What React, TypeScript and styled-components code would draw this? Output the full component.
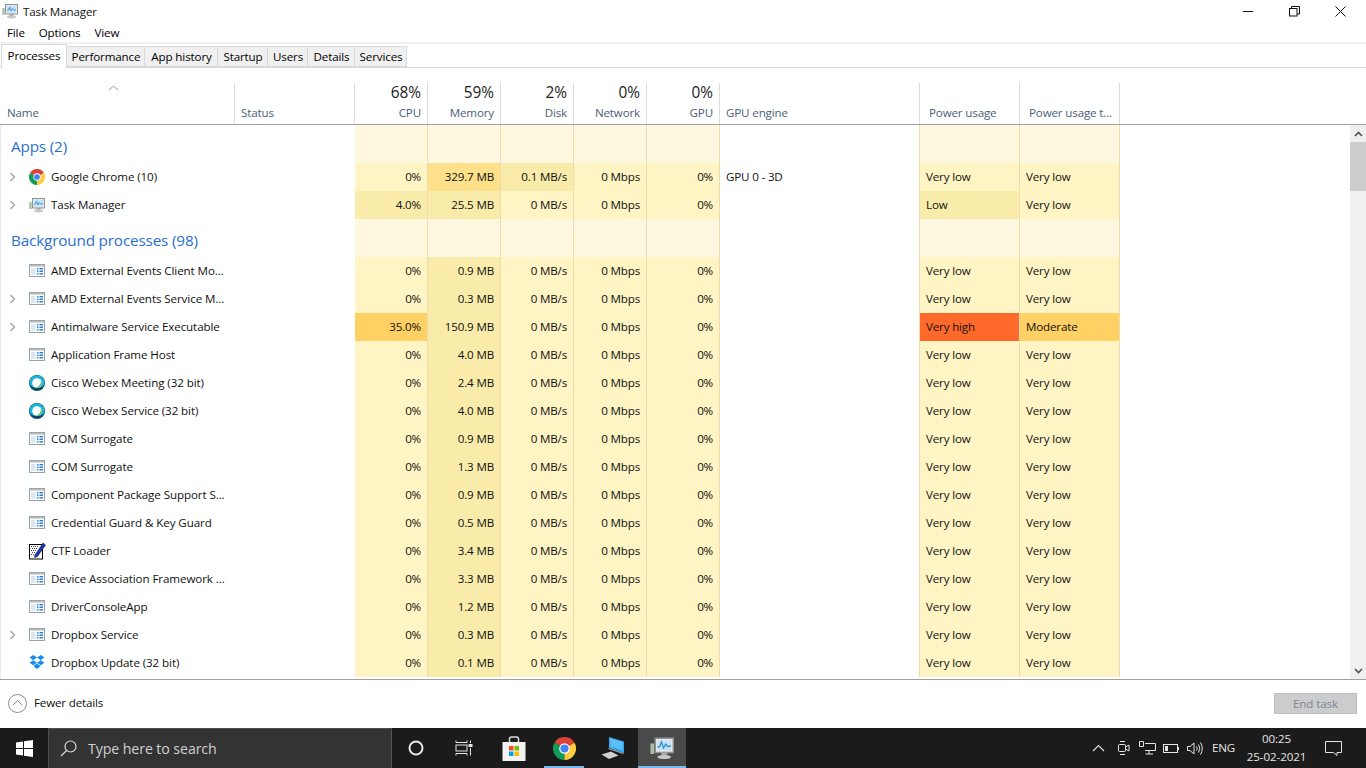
import React from 'react';
import styled, { createGlobalStyle } from 'styled-components';

const Global = createGlobalStyle`
  html, body { margin: 0; padding: 0; background: #fff; overflow: hidden; }
  body { font-family: "Open Sans", "Noto Sans", "Liberation Sans", sans-serif; font-size: 12px; color: #000; }
  * { box-sizing: border-box; }
`;

const COLS = '235px 120px 73px 73px 73px 73px 73px 200px 100px 100px';

const Page = styled.div`
  width: 1366px; height: 768px; display: flex; flex-direction: column; overflow: hidden;
`;
const TitleBar = styled.div`
  height: 22px; display: flex; align-items: center; padding-left: 2px; gap: 5px;
`;
const TitleText = styled.span`font-size: 11.6px; letter-spacing: -0.12px; color: #111;`;
const WinButtons = styled.div`
  margin-left: auto; display: flex; padding-right: 3px;
`;
const WinBtn = styled.div`
  width: 46px; height: 22px; display: flex; align-items: center; justify-content: center;
`;
const MenuBar = styled.div`
  height: 20px; display: flex; gap: 14px; padding-left: 7px; align-items: center; font-size: 11.6px; letter-spacing: -0.15px;
`;
const TabStrip = styled.div`
  height: 26px; background: linear-gradient(#f0f0f0 0 2px, #fff 2px); display: flex; align-items: flex-end; border-bottom: 1px solid #d9d9d9; padding-left: 1px;
`;
const Tab = styled.div<{ $active?: boolean; $w: number }>`
  width: ${p => p.$w}px;
  height: ${p => (p.$active ? 24 : 21)}px;
  margin-bottom: ${p => (p.$active ? -1 : 0)}px;
  background: ${p => (p.$active ? '#fff' : '#f0f0f0')};
  border: 1px solid #d9d9d9;
  border-bottom: ${p => (p.$active ? 'none' : '1px solid #d9d9d9')};
  border-left: ${p => (p.$active ? '1px solid #d9d9d9' : 'none')};
  display: flex; align-items: center; justify-content: center;
  font-size: 11.6px; letter-spacing: -0.12px; padding-bottom: ${p => (p.$active ? 3 : 0)}px;
  padding-left: ${p => (p.$active ? 0 : 1)}px;
  white-space: nowrap;
`;
const HeaderWrap = styled.div`
  margin-top: 15px; height: 42px; border-bottom: 1px solid #a0a0a0; flex: none;
`;
const HeaderRow = styled.div`
  display: grid; grid-template-columns: ${COLS}; width: 1120px; height: 41px;
`;
const HeadCell = styled.div<{ $left?: boolean }>`
  position: relative;
  border-right: 1px solid #dcdcdc;
  display: flex; flex-direction: column; justify-content: flex-end;
  align-items: ${p => (p.$left ? 'flex-start' : 'flex-end')};
  padding: 0 6px 3px 6px;
`;
const HeadPct = styled.div`font-size: 15.4px; line-height: 20px; color: #222; margin-bottom: 1px;`;
const HeadLabel = styled.div<{ $inset?: number }>`
  font-size: 11.6px; line-height: 17px; color: #4c607a; letter-spacing: -0.15px;
  white-space: nowrap; padding-left: ${p => p.$inset ?? 0}px;
`;
const SortCaret = styled.svg`position: absolute; left: 108px; top: 2px;`;

const Body = styled.div`
  flex: none; height: 555px; display: flex; border-bottom: 1px solid #a0a0a0; overflow: hidden;
`;
const Table = styled.div`width: 1350px; overflow: hidden; box-shadow: inset 1px 0 0 #e8e8e8;`;
const Row = styled.div<{ $h: number }>`
  display: grid; grid-template-columns: ${COLS}; width: 1120px; height: ${p => p.$h}px;
`;
const NameCell = styled.div`
  display: flex; align-items: center; white-space: nowrap; overflow: hidden; padding-left: 9px; padding-bottom: 1px;
  font-size: 11.6px; letter-spacing: -0.09px; color: #111;
`;
const Chevron = styled.svg`width: 8px; height: 10px; flex: none;`;
const ChevronSlot = styled.span`width: 20px; flex: none; display: flex;`;
const IconSlot = styled.span`width: 22px; flex: none; display: flex; align-items: center;`;
const GroupLabel = styled.div<{ $pt: number }>`
  display: flex; align-items: center; padding-left: 11px; padding-top: ${p => p.$pt}px;
  font-size: 15.3px; letter-spacing: -0.18px; color: #2a6fcf; white-space: nowrap;
`;
const Blank = styled.div``;
const Cell = styled.div<{ $bg: string; $left?: boolean }>`
  background: ${p => p.$bg};
  border-right: 1px solid #f0dca8;
  display: flex; align-items: center;
  justify-content: ${p => (p.$left ? 'flex-start' : 'flex-end')};
  padding: 0 6px 1px 6px;
  font-size: 11.6px; letter-spacing: -0.17px; color: #111; white-space: nowrap;
`;
const EngineCell = styled.div`
  border-right: 1px solid #f0dca8; display: flex; align-items: center; padding: 0 6px 1px 6px;
  font-size: 11.6px; letter-spacing: -0.17px; color: #111;
`;
const ScrollBar = styled.div`
  width: 16px; margin-left: auto; background: #f0f0f0; display: flex; flex-direction: column;
`;
const ScrollBtn = styled.div`
  height: 17px; flex: none; display: flex; align-items: center; justify-content: center;
`;
const ScrollThumb = styled.div`height: 49px; flex: none; background: #cdcdcd;`;
const ScrollFill = styled.div`flex: 1;`;

const Footer = styled.div`
  height: 48px; flex: none; display: flex; align-items: center; padding: 0 9px 2px 8px; gap: 7px;
  font-size: 11.6px; letter-spacing: -0.17px; color: #111;
`;
const FooterLabel = styled.span`padding-bottom: 1px;`;
const EndTask = styled.div`
  margin-left: auto; width: 83px; height: 21px; background: #cccccc; border: 1px solid #bfbfbf;
  display: flex; align-items: center; justify-content: center; color: #7c8594; font-size: 11.6px; letter-spacing: -0.1px;
`;

const TaskBar = styled.div`
  height: 40px; flex: none; background: #1b1b1b; display: flex; align-items: stretch; color: #fff;
`;
const StartBtn = styled.div`width: 48px; display: flex; align-items: center; justify-content: center;`;
const SearchBox = styled.div`
  width: 344px; background: #333333; border: 1px solid #4f4f4f; border-bottom: none; border-right-color: #555;
  display: flex; align-items: center; padding-left: 11px; gap: 11px; color: #cfcfcf; font-size: 14.2px; letter-spacing: -0.1px;
`;
const TbSlot = styled.div<{ $w: number; $active?: boolean; $running?: boolean }>`
  width: ${p => p.$w}px; display: flex; align-items: center; justify-content: center; position: relative;
  background: ${p => (p.$active ? '#4a4a4a' : 'transparent')};
  ${p => (p.$running ? `&::after { content: ''; position: absolute; left: ${p.$active ? 0 : 4}px; right: ${p.$active ? 0 : 4}px; bottom: 0; height: 2px; background: #76b9ed; }` : '')}
`;
const Tray = styled.div`
  margin-left: auto; display: flex; align-items: center; color: #e6e6e6; font-size: 11.6px;
`;
const TrayIcon = styled.div<{ $w: number }>`
  width: ${p => p.$w}px; display: flex; align-items: center; justify-content: center;
`;
const Lang = styled.div`width: 33px; text-align: center; letter-spacing: -0.2px; padding-bottom: 1px;`;
const Clock = styled.div`
  width: 73px; text-align: center; line-height: 18.5px; font-size: 11.6px; letter-spacing: -0.1px;
`;
const Notify = styled.div`width: 40px; margin-right: 13px; display: flex; align-items: center; justify-content: center;`;

/* ---------- icons ---------- */
const TmIcon = ({ s = 16 }: { s?: number }) => (
  <svg width={s} height={s} viewBox="0 0 16 16">
    <rect x="0.3" y="5" width="2.4" height="7" fill="#a9c09f" />
    <rect x="3.5" y="1.5" width="12" height="9.5" fill="#e4e8ea" stroke="#8f9396" />
    <rect x="5" y="3" width="9" height="6.5" fill="#c4e2f8" />
    <path d="M5 7.5 L6.5 7 L7.7 4 L9 8 L10.5 5.5 L12 7.2 L14 6.5" fill="none" stroke="#3a8fcf" strokeWidth="0.9" />
    <rect x="7.5" y="11" width="4" height="2" fill="#aaa" />
    <ellipse cx="9.5" cy="14" rx="4.6" ry="1.4" fill="#c8c8c8" />
  </svg>
);
const AppIcon = () => (
  <svg width="16" height="13" viewBox="0 0 16 13">
    <rect x="0.5" y="0.5" width="15" height="12" fill="#fff" stroke="#9aa1a7" />
    <rect x="1" y="1" width="14" height="1.6" fill="#b8bfc5" />
    <rect x="2" y="4" width="4.5" height="7" fill="#d9e8f5" />
    <rect x="8" y="4" width="1.5" height="1.5" fill="#2f86d0" />
    <rect x="10.5" y="4" width="3.5" height="1.5" fill="#2f86d0" />
    <rect x="8" y="6.5" width="1.5" height="1.5" fill="#2f86d0" />
    <rect x="10.5" y="6.5" width="3.5" height="1.5" fill="#2f86d0" />
    <rect x="8" y="9" width="1.5" height="1.5" fill="#2f86d0" />
    <rect x="10.5" y="9" width="3.5" height="1.5" fill="#2f86d0" />
  </svg>
);
const ChromeIcon = ({ s = 16 }: { s?: number }) => (
  <svg width={s} height={s} viewBox="0 0 48 48">
    <path d="M24 24 L44.8 12 A24 24 0 0 0 3.2 12 Z" fill="#db4437" />
    <path d="M3.2 12 A24 24 0 0 0 24 48 L24 24 Z" fill="#0f9d58" />
    <path d="M44.8 12 A24 24 0 0 1 24 48 L24 24 Z" fill="#ffcd40" />
    <circle cx="24" cy="24" r="11" fill="#fff" />
    <circle cx="24" cy="24" r="8.6" fill="#4285f4" />
  </svg>
);
const WebexIcon = () => (
  <svg width="16" height="16" viewBox="0 0 16 16">
    <circle cx="8" cy="8" r="8" fill="#0c4668" />
    <path d="M0.3 7.5 A7.7 7.7 0 0 1 8 0.3 A7.7 7.7 0 0 1 15.7 7.5 A7.7 5.5 0 0 1 0.3 7.5 Z" fill="#17b6dd" />
    <circle cx="8" cy="8" r="4.8" fill="#fff" />
    <path d="M11.8 5.3 A4.8 4.8 0 0 1 6 12.4 A6 6 0 0 0 11.8 5.3 Z" fill="#62b94d" />
  </svg>
);
const CtfIcon = () => (
  <svg width="17" height="18" viewBox="0 0 17 18">
    <rect x="0.5" y="2.5" width="13" height="14.5" fill="#fff" stroke="#000" />
    <path d="M2 4h1v1H2zM4 4h1v1H4zM6 4h1v1H6zM8 4h1v1H8zM3 6h1v1H3zM5 6h1v1H5zM7 6h1v1H7zM2 8h1v1H2zM4 8h1v1H4zM6 8h1v1H6zM3 10h1v1H3zM5 10h1v1H5zM2 12h1v1H2zM4 12h1v1H4z" fill="#444" />
    <path d="M6 13 L14 1 L16.5 3 L8.5 14.5 L5.5 15.5 Z" fill="#1738b8" stroke="#000" strokeWidth="0.5" />
  </svg>
);
const DropboxIcon = () => (
  <svg width="16" height="15" viewBox="0 0 15 14">
    <path d="M4 0 L7.5 2.4 L4 4.8 L0.5 2.4 Z M11 0 L14.5 2.4 L11 4.8 L7.5 2.4 Z M4 4.8 L7.5 7.2 L4 9.6 L0.5 7.2 Z M11 4.8 L14.5 7.2 L11 9.6 L7.5 7.2 Z M4 10.3 L7.5 8 L11 10.3 L7.5 13 Z" fill="#1a8cf0" />
  </svg>
);
const ChevronIcon = () => (
  <Chevron viewBox="0 0 8 10"><path d="M1.5 1 L5.5 5 L1.5 9" fill="none" stroke="#a0a0a0" strokeWidth="1.3" /></Chevron>
);

type IconKind = 'chrome' | 'tm' | 'app' | 'webex' | 'ctf' | 'dropbox';
const ICONS: Record<IconKind, React.ReactNode> = {
  chrome: <ChromeIcon />, tm: <TmIcon />, app: <AppIcon />, webex: <WebexIcon />, ctf: <CtfIcon />, dropbox: <DropboxIcon />,
};

const BASE = '#fff4c4', WARM = '#f9ecaa', HOT = '#ffe08a', GROUP = '#fff8e1';

type P = { name: string; icon: IconKind; exp?: boolean; cpu: string; mem: string; disk?: string; eng?: string;
  cpuBg?: string; memBg?: string; diskBg?: string; pw?: string; pwBg?: string; pt?: string; ptBg?: string };

const apps: P[] = [
  { name: 'Google Chrome (10)', icon: 'chrome', exp: true, cpu: '0%', mem: '329.7 MB', memBg: HOT, disk: '0.1 MB/s', diskBg: WARM, eng: 'GPU 0 - 3D' },
  { name: 'Task Manager', icon: 'tm', exp: true, cpu: '4.0%', cpuBg: WARM, mem: '25.5 MB', pw: 'Low', pwBg: WARM },
];
const bg: P[] = [
  { name: 'AMD External Events Client Mo...', icon: 'app', cpu: '0%', mem: '0.9 MB' },
  { name: 'AMD External Events Service M...', icon: 'app', exp: true, cpu: '0%', mem: '0.3 MB' },
  { name: 'Antimalware Service Executable', icon: 'app', exp: true, cpu: '35.0%', cpuBg: '#ffd064', mem: '150.9 MB', pw: 'Very high', pwBg: '#ff6a2b', pt: 'Moderate', ptBg: '#ffd064' },
  { name: 'Application Frame Host', icon: 'app', cpu: '0%', mem: '4.0 MB' },
  { name: 'Cisco Webex Meeting (32 bit)', icon: 'webex', cpu: '0%', mem: '2.4 MB' },
  { name: 'Cisco Webex Service (32 bit)', icon: 'webex', cpu: '0%', mem: '4.0 MB' },
  { name: 'COM Surrogate', icon: 'app', cpu: '0%', mem: '0.9 MB' },
  { name: 'COM Surrogate', icon: 'app', cpu: '0%', mem: '1.3 MB' },
  { name: 'Component Package Support S...', icon: 'app', cpu: '0%', mem: '0.9 MB' },
  { name: 'Credential Guard & Key Guard', icon: 'app', cpu: '0%', mem: '0.5 MB' },
  { name: 'CTF Loader', icon: 'ctf', cpu: '0%', mem: '3.4 MB' },
  { name: 'Device Association Framework ...', icon: 'app', cpu: '0%', mem: '3.3 MB' },
  { name: 'DriverConsoleApp', icon: 'app', cpu: '0%', mem: '1.2 MB' },
  { name: 'Dropbox Service', icon: 'app', exp: true, cpu: '0%', mem: '0.3 MB' },
  { name: 'Dropbox Update (32 bit)', icon: 'dropbox', cpu: '0%', mem: '0.1 MB' },
];

const ProcessRow = ({ p }: { p: P }) => (
  <Row $h={28}>
    <NameCell>
      <ChevronSlot>{p.exp && <ChevronIcon />}</ChevronSlot>
      <IconSlot>{ICONS[p.icon]}</IconSlot>
      {p.name}
    </NameCell>
    <Blank />
    <Cell $bg={p.cpuBg ?? BASE}>{p.cpu}</Cell>
    <Cell $bg={p.memBg ?? WARM}>{p.mem}</Cell>
    <Cell $bg={p.diskBg ?? BASE}>{p.disk ?? '0 MB/s'}</Cell>
    <Cell $bg={BASE}>0 Mbps</Cell>
    <Cell $bg={BASE}>0%</Cell>
    <EngineCell>{p.eng}</EngineCell>
    <Cell $left $bg={p.pwBg ?? BASE}>{p.pw ?? 'Very low'}</Cell>
    <Cell $left $bg={p.ptBg ?? BASE}>{p.pt ?? 'Very low'}</Cell>
  </Row>
);

const GroupRow = ({ label, h, pt }: { label: string; h: number; pt: number }) => (
  <Row $h={h}>
    <GroupLabel $pt={pt}>{label}</GroupLabel>
    <Blank />
    {[0, 1, 2, 3, 4].map(i => <Cell key={i} $bg={GROUP} />)}
    <EngineCell />
    <Cell $bg={GROUP} />
    <Cell $bg={GROUP} />
  </Row>
);

const heads: [string, string][] = [['68%', 'CPU'], ['59%', 'Memory'], ['2%', 'Disk'], ['0%', 'Network'], ['0%', 'GPU']];
const tabs: [string, number][] = [['Processes', 66], ['Performance', 78], ['App history', 73], ['Startup', 50], ['Users', 40], ['Details', 47], ['Services', 52]];

export default function App() {
  return (
    <Page>
      <Global />
      <TitleBar>
        <TmIcon />
        <TitleText>Task Manager</TitleText>
        <WinButtons>
          <WinBtn>
            <svg width="11" height="11" viewBox="0 0 11 11"><path d="M0 5.5H10" stroke="#111" /></svg>
          </WinBtn>
          <WinBtn>
            <svg width="11" height="11" viewBox="0 0 11 11" fill="none" stroke="#111"><rect x="0.5" y="2.5" width="7.5" height="7.5" /><path d="M2.5 2.5V0.5H10.5V8H8" /></svg>
          </WinBtn>
          <WinBtn>
            <svg width="11" height="11" viewBox="0 0 11 11"><path d="M0.5 0.5L10.5 10.5M10.5 0.5L0.5 10.5" stroke="#111" /></svg>
          </WinBtn>
        </WinButtons>
      </TitleBar>
      <MenuBar><span>File</span><span>Options</span><span>View</span></MenuBar>
      <TabStrip>
        {tabs.map(([t, w], i) => <Tab key={t} $w={w} $active={i === 0}>{t}</Tab>)}
      </TabStrip>
      <HeaderWrap>
        <HeaderRow>
          <HeadCell $left>
            <SortCaret width="11" height="6" viewBox="0 0 11 6"><path d="M1 5L5.5 1L10 5" fill="none" stroke="#999" /></SortCaret>
            <HeadLabel $inset={1}>Name</HeadLabel>
          </HeadCell>
          <HeadCell $left><HeadLabel>Status</HeadLabel></HeadCell>
          {heads.map(([p, l]) => (
            <HeadCell key={l}><HeadPct>{p}</HeadPct><HeadLabel>{l}</HeadLabel></HeadCell>
          ))}
          <HeadCell $left><HeadLabel>GPU engine</HeadLabel></HeadCell>
          <HeadCell $left><HeadLabel $inset={3}>Power usage</HeadLabel></HeadCell>
          <HeadCell $left><HeadLabel $inset={3}>Power usage t...</HeadLabel></HeadCell>
        </HeaderRow>
      </HeaderWrap>
      <Body>
        <Table>
          <GroupRow label="Apps (2)" h={38} pt={3} />
          {apps.map(p => <ProcessRow key={p.name} p={p} />)}
          <GroupRow label="Background processes (98)" h={38} pt={4} />
          {bg.map((p, i) => <ProcessRow key={i} p={p} />)}
        </Table>
        <ScrollBar>
          <ScrollBtn><svg width="9" height="6" viewBox="0 0 9 6"><path d="M1 5L4.5 1.5L8 5" fill="none" stroke="#505050" strokeWidth="1.6" /></svg></ScrollBtn>
          <ScrollThumb />
          <ScrollFill />
          <ScrollBtn><svg width="9" height="6" viewBox="0 0 9 6"><path d="M1 1L4.5 4.5L8 1" fill="none" stroke="#505050" strokeWidth="1.6" /></svg></ScrollBtn>
        </ScrollBar>
      </Body>
      <Footer>
        <svg width="19" height="19" viewBox="0 0 19 19" fill="none" stroke="#8c8c8c"><circle cx="9.5" cy="9.5" r="9" /><path d="M5 11L9.5 6.5L14 11" strokeWidth="1" /></svg>
        <FooterLabel>Fewer details</FooterLabel>
        <EndTask>End task</EndTask>
      </Footer>
      <TaskBar>
        <StartBtn>
          <svg width="17" height="17" viewBox="0 0 17 17" fill="#fff"><path d="M0 2.4L7 1.4V8H0ZM8 1.3L17 0V8H8ZM0 9H7V15.6L0 14.6ZM8 9H17V17L8 15.7Z" /></svg>
        </StartBtn>
        <SearchBox>
          <svg width="17" height="17" viewBox="0 0 17 17" fill="none" stroke="#d8d8d8" strokeWidth="1.2"><circle cx="10.5" cy="6.5" r="5.5" /><path d="M6.5 10.5L1 16" /></svg>
          <span>Type here to search</span>
        </SearchBox>
        <TbSlot $w={48}>
          <svg width="16" height="16" viewBox="0 0 16 16" fill="none" stroke="#e8e8e8" strokeWidth="2"><circle cx="8" cy="8" r="6.5" /></svg>
        </TbSlot>
        <TbSlot $w={48}>
          <svg width="18" height="16" viewBox="0 0 18 16" fill="none" stroke="#e8e8e8" strokeWidth="1"><path d="M1 2.5H12V0.5M1 2.5V0.5" /><rect x="1" y="5" width="11" height="6" /><path d="M1 13.5H12V15.5M1 13.5V15.5" /><rect x="14" y="4.5" width="3" height="2" fill="#e8e8e8" /><path d="M15.5 0.5V3M15.5 8V15.5" /></svg>
        </TbSlot>
        <TbSlot $w={52}>
          <svg width="24" height="25" viewBox="0 0 24 25"><path d="M7.5 7V3A2 2 0 0 1 9.5 1H14.5A2 2 0 0 1 16.5 3V7" fill="none" stroke="#dddddd" strokeWidth="1.5" /><rect x="0.5" y="6" width="23" height="19" fill="#f3f3f3" /><rect x="7" y="10" width="4.5" height="4.5" fill="#f25022" /><rect x="12.5" y="10" width="4.5" height="4.5" fill="#7fba00" /><rect x="7" y="15.5" width="4.5" height="4.5" fill="#00a4ef" /><rect x="12.5" y="15.5" width="4.5" height="4.5" fill="#ffb900" /></svg>
        </TbSlot>
        <TbSlot $w={48} $running><ChromeIcon s={23} /></TbSlot>
        <TbSlot $w={50}>
          <svg width="24" height="24" viewBox="0 0 24 24"><path d="M8 1L23 5.5V17L8 12Z" fill="#35a7f2" /><path d="M9.5 2.5L21.5 6V14L9.5 10.5Z" fill="#5cc0f7" /><path d="M8 12L23 17L22 18L7 13Z" fill="#9a9a9a" /><path d="M0.5 18.5L10 15.5L17.5 19.5L8 23Z" fill="#d0d0d0" /></svg>
        </TbSlot>
        <TbSlot $w={48} $active $running><TmIcon s={24} /></TbSlot>
        <Tray>
          <TrayIcon $w={26}><svg width="13" height="8" viewBox="0 0 13 8" fill="none" stroke="#e6e6e6" strokeWidth="1.1"><path d="M1 7L6.5 1.5L12 7" /></svg></TrayIcon>
          <TrayIcon $w={24}><svg width="13" height="16" viewBox="0 0 13 16" fill="none" stroke="#e6e6e6"><rect x="1.5" y="4.5" width="7" height="7" rx="1" /><path d="M8.5 7L12 5V11L8.5 9M3 1.5H8M3 14.5H8" /></svg></TrayIcon>
          <TrayIcon $w={24}><svg width="17" height="14" viewBox="0 0 17 14" fill="none" stroke="#e6e6e6"><path d="M6 2.5H16.5V9.5H6M0.5 0.5H4.5V5.5H0.5ZM10 9.5V13M6.5 13H14" /></svg></TrayIcon>
          <TrayIcon $w={24}><svg width="16" height="9" viewBox="0 0 16 9" fill="none" stroke="#e6e6e6"><rect x="0.5" y="0.5" width="14" height="8" /><rect x="2" y="2" width="3" height="5" fill="#e6e6e6" stroke="none" /><path d="M15.5 3V6" /></svg></TrayIcon>
          <TrayIcon $w={24}><svg width="17" height="13" viewBox="0 0 17 13" fill="none" stroke="#e6e6e6"><path d="M0.5 4.5H3L7 1V12L3 8.5H0.5ZM9.5 4.5Q11 6.5 9.5 8.5M11.5 2.5Q14 6.5 11.5 10.5M13.5 0.5Q17 6.5 13.5 12.5" /></svg></TrayIcon>
          <Lang>ENG</Lang>
          <Clock>00:25<br />25-02-2021</Clock>
          <Notify><svg width="17" height="15" viewBox="0 0 17 15" fill="none" stroke="#e6e6e6"><path d="M0.5 0.5H16.5V11.5H12V14.5L8.5 11.5H0.5Z" /></svg></Notify>
        </Tray>
      </TaskBar>
    </Page>
  );
}
